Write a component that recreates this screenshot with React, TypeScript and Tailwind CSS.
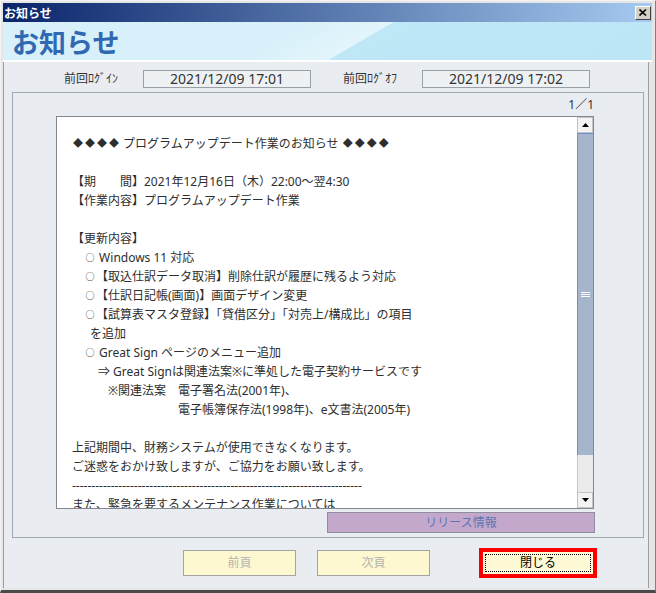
import React from "react";

type Line = { t: string; c?: string };

const lines: Line[] = [
  { t: "◆◆◆◆ プログラムアップデート作業のお知らせ ◆◆◆◆" },
  { t: "" },
  { t: "【期　　間】2021年12月16日（木）22:00～翌4:30" },
  { t: "【作業内容】プログラムアップデート作業" },
  { t: "" },
  { t: "【更新内容】" },
  { t: "○ Windows 11 対応", c: "pl-[12px]" },
  { t: "○【取込仕訳データ取消】削除仕訳が履歴に残るよう対応", c: "pl-[12px]" },
  { t: "○【仕訳日記帳(画面)】画面デザイン変更", c: "pl-[12px]" },
  { t: "○【試算表マスタ登録】「貸借区分」「対売上/構成比」の項目", c: "pl-[12px]" },
  { t: "を追加", c: "pl-[18px]" },
  { t: "○ Great Sign ページのメニュー追加", c: "pl-[12px]" },
  { t: "⇒ Great Signは関連法案※に準処した電子契約サービスです", c: "pl-[26px]" },
  { t: "※関連法案　電子署名法(2001年)、", c: "pl-[36px]" },
  { t: "電子帳簿保存法(1998年)、e文書法(2005年)", c: "pl-[106px]" },
  { t: "" },
  { t: "上記期間中、財務システムが使用できなくなります。" },
  { t: "ご迷惑をおかけ致しますが、ご協力をお願い致します。" },
  { t: "---------------------------------------------------------------------------" },
  { t: "また、緊急を要するメンテナンス作業については" },
];

function renderText(t: string) {
  const parts: React.ReactNode[] = [];
  let buf = "";
  let k = 0;
  for (const ch of t) {
    if (ch === "◆" || ch === "○") {
      if (buf) parts.push(<span key={k++}>{buf}</span>);
      buf = "";
      parts.push(
        ch === "◆" ? (
          <span key={k++} className="inline-block w-[12px] text-center text-[10px] align-top leading-[19px]">◆</span>
        ) : (
          <span key={k++} className="inline-block w-[12px] text-center text-[9px] align-top leading-[19px]">○</span>
        )
      );
    } else {
      buf += ch;
    }
  }
  if (buf) parts.push(<span key={k++}>{buf}</span>);
  return parts;
}

function Tri({ down }: { down?: boolean }) {
  return (
    <svg width="7" height="4" viewBox="0 0 7 4">
      {down ? <polygon points="0,0 7,0 3.5,4" fill="#000" /> : <polygon points="0,4 7,4 3.5,0" fill="#000" />}
    </svg>
  );
}

export default function App() {
  return (
    <div className="w-[656px] h-[593px] bg-[#e6e6e6] border-t border-l border-t-[#f4f4f4] border-l-[#f4f4f4] border-r border-r-[#808080] border-b-[3px] border-b-[#4a4a4a] pt-[2px] pl-[2px] pr-[3px] pb-[2px] flex flex-col overflow-hidden [font-family:'Noto_Sans','Noto_Sans_CJK_JP',sans-serif]">
      {/* title bar */}
      <div className="h-[19px] shrink-0 flex items-center justify-between bg-[linear-gradient(to_right,#0a246a,#a6caf0)]">
        <span className="pl-[1px] text-white font-bold text-[12px] leading-none [font-family:'Noto_Sans_CJK_JP',sans-serif]">お知らせ</span>
        <div className="mr-[1px] w-[16px] h-[14px] bg-[#d4d0c8] border border-t-white border-l-white border-r-[#404040] border-b-[#404040] flex items-center justify-center">
          <svg width="8" height="7" viewBox="0 0 8 7">
            <path d="M0.5 0.5 L7 6.5 M7 0.5 L0.5 6.5" stroke="#000" strokeWidth="1.6" />
          </svg>
        </div>
      </div>
      {/* header */}
      <div className="h-[38px] shrink-0 flex items-center pl-[9px] bg-[linear-gradient(150deg,#d8f0fa_0px,#d8f0fa_150px,#e3f5fc_195px,#bee8f6_196px,#bce6f6_100%)]">
        <span className="text-[27px] font-bold text-[#3069b1] leading-none [font-family:'Noto_Sans_CJK_JP',sans-serif]">お知らせ</span>
      </div>
      <div className="h-[2px] shrink-0 bg-white" />
      {/* content */}
      <div className="h-[526px] w-[646px] shrink-0 border-l border-r border-[#a0a0a0] bg-[#e9edf2] flex flex-col">
        <div className="mt-[8px] h-[18px] flex items-center pl-[60px] text-[#333]">
          <span className="w-[79px] text-[12px] leading-none">前回ﾛｸﾞｲﾝ</span>
          <div className="w-[168px] h-[18px] border border-[#9a9ea6] bg-[#eef1f4] flex items-center justify-center text-[14px] leading-none">2021/12/09 17:01</div>
          <span className="ml-[32px] w-[79px] text-[12px] leading-none">前回ﾛｸﾞｵﾌ</span>
          <div className="w-[168px] h-[18px] border border-[#9a9ea6] bg-[#eef1f4] flex items-center justify-center text-[14px] leading-none">2021/12/09 17:02</div>
        </div>
        {/* panel */}
        <div className="mt-[4px] ml-[8px] w-[632px] h-[446px] border border-[#a3a8b0] flex flex-col">
          <div className="h-[23px] flex items-center justify-end pr-[49px] text-[12px] text-[#333] leading-none">1／1</div>
          <div className="ml-[43px] w-[538px] h-[393px] border border-[#828790] bg-white flex">
            <div className="flex-1 overflow-hidden pt-[17px] pl-[15px] text-[12px] leading-[19px] text-[#2e2e2e] whitespace-nowrap">
              {lines.map((l, i) =>
                l.t === "" ? (
                  <div key={i} className="h-[19px]" />
                ) : (
                  <div key={i} className={l.c ?? ""}>
                    {renderText(l.t)}
                  </div>
                )
              )}
            </div>
            <div className="w-[16px] flex flex-col">
              <div className="h-[16px] bg-[#f3f3f3] border border-[#c4c4c4] flex items-center justify-center">
                <Tri />
              </div>
              <div className="h-[322px] bg-[#a5b5cc] border-l border-t border-[#6e8fcb] flex items-center justify-center">
                <div className="flex flex-col gap-[1px] w-[9px]">
                  <div className="h-[1px] bg-white" />
                  <div className="h-[1px] bg-white" />
                  <div className="h-[1px] bg-white" />
                </div>
              </div>
              <div className="h-[37px] bg-[#ebebeb] border-l border-[#c8c8c8]" />
              <div className="h-[16px] bg-[#f3f3f3] border border-[#c4c4c4] flex items-center justify-center">
                <Tri down />
              </div>
            </div>
          </div>
          <div className="ml-[314px] mt-[3px] w-[268px] h-[21px] bg-[#c4a8cc] border border-[#8f8fa0] flex items-center justify-center text-[12px] text-[#5d76b3] leading-none">
            リリース情報
          </div>
        </div>
        {/* buttons */}
        <div className="mt-[10px] h-[30px] flex items-center pl-[179px]">
          <div className="w-[113px] h-[26px] bg-[#fdf8cf] border border-[#a4a4a4] flex items-center justify-center text-[12px] text-[#b4b4b4] leading-none">前頁</div>
          <div className="ml-[21px] w-[113px] h-[26px] bg-[#fdf8cf] border border-[#a4a4a4] flex items-center justify-center text-[12px] text-[#b4b4b4] leading-none">次頁</div>
          <div className="ml-[49px] w-[118px] h-[30px] border-[4px] border-[#ff0000] bg-[#fffad6] p-[2px]">
            <div className="w-full h-full border border-dotted border-black flex items-center justify-center text-[12px] text-black leading-none">閉じる</div>
          </div>
        </div>
      </div>
    </div>
  );
}
